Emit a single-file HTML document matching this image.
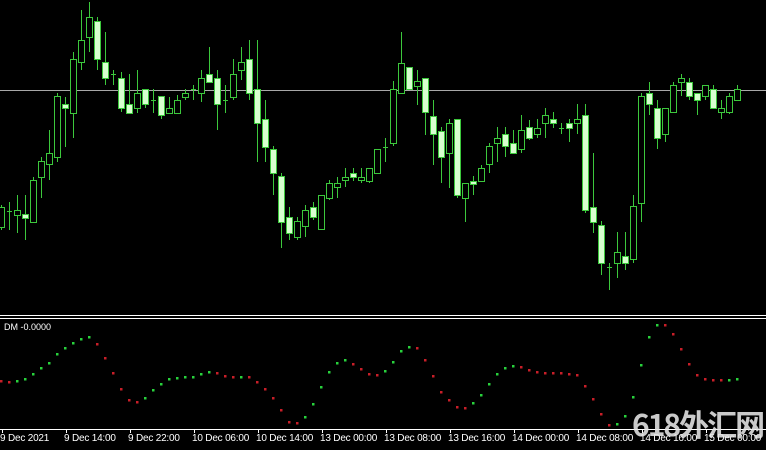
<!DOCTYPE html>
<html><head><meta charset="utf-8"><style>
html,body{margin:0;padding:0;background:#000;width:766px;height:450px;overflow:hidden;position:relative;font-family:"Liberation Sans",sans-serif}
svg{position:absolute;left:0;top:0}
.lbl{position:absolute;top:433px;color:#fff;font-size:10px;white-space:nowrap;letter-spacing:-0.2px}
.wm{position:absolute;left:632px;top:405px;width:134px;height:40px;overflow:hidden;white-space:nowrap;font-family:"Noto Sans CJK SC","WenQuanYi Zen Hei",sans-serif;font-size:30px;font-weight:bold;color:rgba(230,230,230,0.88);letter-spacing:-2px;line-height:36px}
.dm{position:absolute;left:4px;top:322px;color:#fff;font-size:9px}
</style></head><body>
<svg id="s" width="766" height="450" xmlns="http://www.w3.org/2000/svg">
<line x1="0" y1="90.5" x2="766" y2="90.5" stroke="#a8a8a8" stroke-width="1"/>
<line x1="0" y1="315.5" x2="766" y2="315.5" stroke="#fff" stroke-width="1"/>
<line x1="0" y1="318.5" x2="766" y2="318.5" stroke="#fff" stroke-width="1"/>
<line x1="0" y1="429.5" x2="766" y2="429.5" stroke="#fff" stroke-width="1"/>
</svg>
<div class="dm">DM -0.0000</div>
<div class="lbl" style="left:0">9 Dec 2021</div>
<div class="lbl" style="left:64px">9 Dec 14:00</div>
<div class="lbl" style="left:128px">9 Dec 22:00</div>
<div class="lbl" style="left:192px">10 Dec 06:00</div>
<div class="lbl" style="left:256px">10 Dec 14:00</div>
<div class="lbl" style="left:320px">13 Dec 00:00</div>
<div class="lbl" style="left:384px">13 Dec 08:00</div>
<div class="lbl" style="left:448px">13 Dec 16:00</div>
<div class="lbl" style="left:512px">14 Dec 00:00</div>
<div class="lbl" style="left:576px">14 Dec 08:00</div>
<div class="lbl" style="left:640px">14 Dec 16:00</div>
<div class="lbl" style="left:704px">15 Dec 00:00</div>
<div class="wm">618外汇网</div>
<script>
var C=[[205,230,207,227,1],[202,230,211,211,2],[195,233,210,215,1],[195,240,214,218,0],[177,222,180,222,1],[157,198,161,177,1],[130,180,153,164,1],[93,162,96,157,1],[97,147,104,108,0],[52,138,59,113,1],[10,70,40,62,1],[2,52,17,37,1],[17,70,21,59,0],[32,85,62,78,0],[70,85,74,74,2],[72,112,78,108,0],[74,113,104,113,0],[70,113,93,108,1],[89,108,89,104,0],[89,113,100,100,2],[96,119,96,115,0],[97,113,108,113,1],[95,113,100,113,1],[89,100,93,97,1],[85,100,89,89,2],[70,102,78,93,1],[47,82,74,82,0],[70,130,78,104,0],[85,113,100,100,2],[59,100,74,97,1],[47,80,62,70,1],[40,100,59,93,0],[40,162,89,123,0],[100,162,119,147,0],[146,195,149,173,0],[173,248,176,222,0],[207,240,217,233,0],[217,240,221,237,1],[205,237,210,226,1],[202,220,207,217,0],[195,229,195,229,1],[180,200,183,198,1],[177,198,183,187,1],[168,187,177,180,1],[168,181,173,177,0],[168,183,177,180,1],[168,183,168,181,1],[149,173,149,173,1],[138,162,147,147,2],[81,146,89,143,1],[32,93,63,93,1],[67,89,67,89,0],[70,105,81,86,1],[78,135,78,112,0],[100,165,116,134,0],[127,183,131,157,0],[119,188,123,153,1],[119,198,119,195,0],[183,222,183,198,1],[176,195,181,183,0],[165,181,168,181,1],[143,173,146,164,1],[127,162,138,143,1],[127,157,134,146,0],[130,153,143,153,0],[115,153,130,149,1],[120,140,127,138,0],[119,138,128,134,1],[108,138,115,123,1],[112,128,119,123,0],[123,134,128,128,2],[119,142,123,128,0],[104,134,119,123,1],[104,213,115,210,0],[153,233,207,222,0],[221,275,225,263,0],[263,290,267,267,2],[232,278,252,263,1],[232,270,256,263,0],[195,263,206,259,1],[93,222,96,203,1],[82,115,93,104,0],[100,149,108,138,0],[108,142,108,134,1],[82,112,85,112,1],[74,96,78,82,1],[78,100,82,96,0],[93,115,93,100,0],[85,100,85,96,1],[85,108,89,108,0],[100,119,108,112,1],[93,114,96,112,1],[85,100,89,100,1]];
var D="381r382r381g379g374g368g363g354g348g343g339g337g344r358r373r389r400r402r398g390g384g379g378g377g377g374g372g373r376r377r377g377r382r389r398r410r422r423r417g404g387g372g363g360g364r369r374r375r371g362g351g347g348r360r376r392r400r407r408r403g395g384g374g368g366g367r370r372r373r373r373r374r375r386r399r414r425r424g416g397g365g337g325g325r334r349r364r375r379r380r380r380g379g";
var s='';var G='#3cc83c',F='#d8ffd0';
C.forEach(function(c,i){var x=1+8*i;
s+='<line x1="'+(x+.5)+'" y1="'+c[0]+'" x2="'+(x+.5)+'" y2="'+c[1]+'" stroke="'+G+'"/>';
if(c[4]==2){s+='<line x1="'+(x-2)+'" y1="'+(c[2]+.5)+'" x2="'+(x+3)+'" y2="'+(c[2]+.5)+'" stroke="'+G+'"/>';}
else{var h=Math.max(c[3]-c[2],3);s+='<rect x="'+(x-2.5)+'" y="'+(c[2]+.5)+'" width="6" height="'+h+'" fill="'+(c[4]?'#000':F)+'" stroke="'+G+'"/>';}
});
var m=D.match(/\d+[rg]/g);
m.forEach(function(t,i){var y=parseInt(t);var col=t.slice(-1)=='r'?'#c81e28':'#28d23c';s+='<rect x="'+(8*i)+'" y="'+(y-1)+'" width="2.5" height="2.5" fill="'+col+'"/>';});
for(var k=0;k<12;k++){s+='<line x1="'+(2+64*k+.5)+'" y1="429" x2="'+(2+64*k+.5)+'" y2="433" stroke="#fff"/>';}
document.getElementById('s').insertAdjacentHTML('beforeend',s);
</script>
</body></html>
